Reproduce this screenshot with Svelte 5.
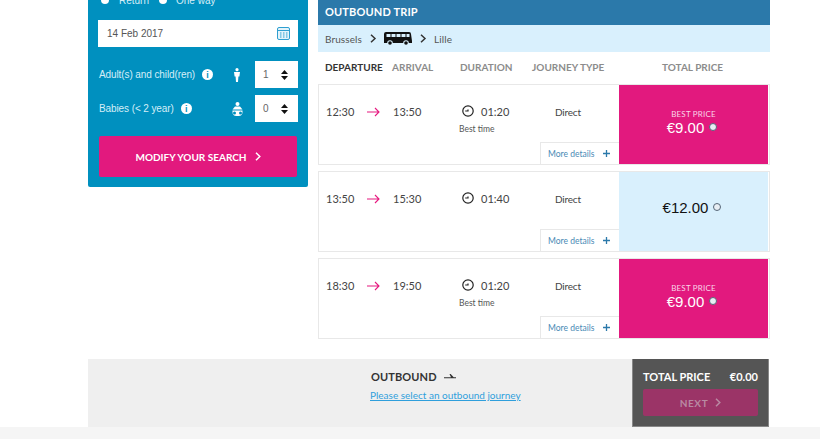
<script>
  const trips = [
    { dep: '12:30', arr: '13:50', dur: '01:20', best: true, price: '€9.00' },
    { dep: '13:50', arr: '15:30', dur: '01:40', best: false, price: '€12.00' },
    { dep: '18:30', arr: '19:50', dur: '01:20', best: true, price: '€9.00' }
  ];
</script>

<div class="page">
  <div class="columns">
    <aside class="search">
      <div class="radios">
        <span class="radio"></span><span class="r-return">Return</span>
        <span class="radio"></span><span class="r-oneway">One way</span>
      </div>
      <div class="date">
        <span>14 Feb 2017</span>
        <svg width="13" height="13" viewBox="0 0 13 13" fill="none" stroke="#2f9fd0">
          <rect x="0.5" y="0.5" width="12" height="12" rx="1.500" fill="#e4f4fb" />
          <path d="M1 3.500h11" />
          <path d="M3 6h1.500M6 6h1.500M9 6h1.500M3 8h1.500M6 8h1.500M9 8h1.500M3 10h1.500M6 10h1.500M9 10h1.500" stroke-width="1.200" />
        </svg>
      </div>
      <div class="pax">
        <span class="pax-label">Adult(s) and child(ren)</span>
        <span class="info">i</span>
        <svg class="pax-icon" width="8" height="14" viewBox="0 0 8 14" fill="#fff">
          <circle cx="4" cy="1.700" r="1.600" />
          <path d="M1 4h6l-.6 4.500H5.400L5 14H3l-.4-5.500H1.600z" />
        </svg>
        <div class="select"><span>1</span><svg width="7" height="10" viewBox="0 0 7 10"><path d="M3.500 0 7 4H0zM0 6h7l-3.500 4z" fill="#111" /></svg></div>
      </div>
      <div class="pax">
        <span class="pax-label">Babies (&lt; 2 year)</span>
        <span class="info">i</span>
        <svg class="pax-icon baby" width="11" height="14" viewBox="0 0 11 14" fill="#fff">
          <circle cx="5.500" cy="2" r="2" />
          <path d="M3 4.500h5L10.500 7.500H.5z" />
          <path fill-rule="evenodd" d="M.5 8.500h10v1.500a4 4 0 0 1-4 4h-2a4 4 0 0 1-4-4zM2.500 9.500a1.500 1.500 0 0 0 0 3 1.500 1.500 0 0 0 0-3zM8.500 9.500a1.500 1.500 0 0 0 0 3 1.500 1.500 0 0 0 0-3z" />
        </svg>
        <div class="select"><span>0</span><svg width="7" height="10" viewBox="0 0 7 10"><path d="M3.500 0 7 4H0zM0 6h7l-3.500 4z" fill="#111" /></svg></div>
      </div>
      <button type="button" class="modify">
        MODIFY YOUR SEARCH
        <svg width="6" height="9" viewBox="0 0 6 9" fill="none" stroke="#fff" stroke-width="1.500"><path d="M1 .7 4.800 4.500 1 8.300" /></svg>
      </button>
    </aside>

    <main class="results">
      <h2>OUTBOUND TRIP</h2>
      <div class="route">
        <span>Brussels</span>
        <svg class="chev" width="7" height="9" viewBox="0 0 7 9" fill="none" stroke="#333" stroke-width="1.500"><path d="M1 .7 5 4.500 1 8.300" /></svg>
        <svg class="bus" width="28" height="13" viewBox="0 0 28 13">
          <path d="M2 0h23a2 2 0 0 1 2 2l1 7v2h-3.200a2.800 2.800 0 0 0-5.600 0H8.800a2.800 2.800 0 0 0-5.600 0H0V2a2 2 0 0 1 2-2z" fill="#111" />
          <path d="M2.500 2h4v3h-4zM7.500 2h4v3h-4zM12.500 2h4v3h-4zM17.500 2h4v3h-4zM22.500 2h3v3h-3z" fill="#d9f0fd" />
          <circle cx="6" cy="11" r="1.800" fill="#111" /><circle cx="22" cy="11" r="1.800" fill="#111" />
        </svg>
        <svg class="chev" width="7" height="9" viewBox="0 0 7 9" fill="none" stroke="#333" stroke-width="1.500"><path d="M1 .7 5 4.500 1 8.300" /></svg>
        <span class="to">Lille</span>
      </div>
      <div class="heads">
        <span class="h-dep">DEPARTURE</span>
        <span class="h-arr">ARRIVAL</span>
        <span class="h-dur">DURATION</span>
        <span class="h-type">JOURNEY TYPE</span>
        <span class="h-price">TOTAL PRICE</span>
      </div>

      {#each trips as trip}
        <div class="trip">
          <div class="info-cell">
            <div class="times">
              <span class="dep">{trip.dep}</span>
              <svg class="arrow" width="13" height="10" viewBox="0 0 13 10" fill="none" stroke="#e6197f" stroke-width="1.100"><path d="M0 5h12M8 1l4 4-4 4" /></svg>
              <span class="arr">{trip.arr}</span>
              <div class="dur">
                <div class="dur-line">
                  <svg width="12" height="12" viewBox="0 0 12 12" fill="none" stroke="#222" stroke-width="1.200"><circle cx="6" cy="6" r="5.200" /><path d="M3.200 6H6V4.500" /></svg>
                  <span>{trip.dur}</span>
                </div>
                {#if trip.best}<div class="best-time">Best time</div>{/if}
              </div>
              <span class="type">Direct</span>
            </div>
            <div class="more">
              <span>More details</span>
              <svg width="7" height="7" viewBox="0 0 7 7" stroke="#2b79aa" stroke-width="1.300"><path d="M3.500 0v7M0 3.500h7" /></svg>
            </div>
          </div>
          <div class="price" class:best={trip.best}>
            {#if trip.best}<div class="best-label">BEST PRICE</div>{/if}
            <div class="amount"><span>{trip.price}</span><span class="dot"></span></div>
          </div>
        </div>
      {/each}
    </main>
  </div>

  <div class="summary">
    <div class="selection">
      <div class="sel-title">
        OUTBOUND
        <svg width="12" height="5" viewBox="0 0 12 5" fill="#333"><path d="M0 3.200h7L5.500 0h1.200l3 3.200H12v1H0z" /></svg>
      </div>
      <a href="#top" class="sel-link">Please select an outbound journey</a>
    </div>
    <div class="total">
      <div class="total-line"><span>TOTAL PRICE</span><span>€0.00</span></div>
      <div class="next">
        NEXT
        <svg width="6" height="9" viewBox="0 0 6 9" fill="none" stroke="#b98aa3" stroke-width="1.500"><path d="M1 .7 4.800 4.500 1 8.300" /></svg>
      </div>
    </div>
  </div>
  <div class="footer"></div>
</div>

<style>
  :global(body) {
    background: #fff;
    overflow: hidden;
  }

  .page {
    height: 439px;
    overflow: hidden;
    font-family: Lato, sans-serif;
    color: #333;
  }

  .columns {
    display: flex;
    align-items: flex-start;
    gap: 10px;
    width: 682px;
    height: 359px;
    margin-left: 88px;
  }

  /* left search panel */
  .search {
    box-sizing: border-box;
    width: 220px;
    height: 187px;
    padding: 0 10px;
    background: #0090bf;
    border-radius: 0 0 2px 2px;
    color: #d5eef7;
    font-family: "Liberation Sans", sans-serif;
    font-size: 10px;
  }

  .radios {
    display: flex;
    align-items: center;
    height: 0;
    margin: 0 0 20px 3px;
  }

  .radio {
    flex: none;
    width: 8px;
    height: 8px;
    background: #fff;
    border-radius: 50%;
  }

  .r-return {
    width: 40px;
    margin-left: 10px;
  }

  .r-oneway {
    margin-left: 9px;
  }

  .date {
    display: flex;
    align-items: center;
    justify-content: space-between;
    box-sizing: border-box;
    height: 27px;
    padding: 0 8px 0 9px;
    background: #fff;
    color: #555;
  }

  .pax {
    display: flex;
    align-items: center;
    height: 27px;
    margin-top: 7px;
    padding-left: 1px;
  }

  .date + .pax {
    margin-top: 14px;
  }

  .pax-label {
    white-space: nowrap;
    letter-spacing: -0.1px;
  }

  .info {
    display: flex;
    align-items: center;
    justify-content: center;
    width: 11px;
    height: 11px;
    margin-left: 7px;
    background: #fff;
    border-radius: 50%;
    color: #0090bf;
    font-size: 9px;
    font-weight: bold;
  }

  .pax-icon {
    margin-left: auto;
    margin-right: 14px;
  }

  .pax-icon.baby {
    margin-right: 12px;
  }

  .select {
    display: flex;
    align-items: center;
    justify-content: space-between;
    box-sizing: border-box;
    width: 43px;
    height: 27px;
    padding: 0 10px 0 8px;
    background: #fff;
    color: #666;
  }

  .modify {
    display: flex;
    align-items: center;
    justify-content: center;
    gap: 8px;
    width: 198px;
    height: 41px;
    margin: 14px 0 0 1px;
    padding: 0;
    border: 0;
    border-radius: 2px;
    background: #e2197e;
    color: #fff;
    font: bold 10px Lato, sans-serif;
  }

  /* results */
  .results {
    width: 452px;
  }

  h2 {
    box-sizing: border-box;
    height: 25px;
    margin: 0;
    padding-left: 7px;
    background: #2b79aa;
    color: #fff;
    font-size: 11px;
    font-weight: bold;
    line-height: 24px;
    letter-spacing: 0.15px;
  }

  .route {
    display: flex;
    align-items: center;
    height: 27px;
    padding-left: 7px;
    background: #d9f0fd;
    color: #555;
    font-size: 10px;
    letter-spacing: 0.1px;
  }

  .chev {
    margin: 0 7px 0 8px;
  }

  .heads {
    display: flex;
    align-items: center;
    box-sizing: border-box;
    height: 32px;
    padding-bottom: 2px;
    color: #8c8c8c;
    font-size: 10px;
    font-weight: bold;
    white-space: nowrap;
  }

  .heads span {
    display: block;
    box-sizing: border-box;
  }

  .h-dep {
    width: 74px;
    padding-left: 7px;
    color: #333;
  }

  .h-arr {
    width: 68px;
  }

  .h-dur {
    width: 72px;
  }

  .h-type {
    width: 130px;
  }

  .trip {
    display: flex;
    box-sizing: border-box;
    width: 452px;
    height: 81px;
    margin-bottom: 6px;
    border: 1px solid #e8e8e8;
  }

  .info-cell {
    position: relative;
    width: 300px;
  }

  .times {
    display: flex;
    align-items: flex-start;
    padding: 20px 0 0 7px;
    font-size: 11px;
    color: #444;
  }

  .dep {
    width: 41px;
  }

  .arrow {
    margin-top: 2px;
  }

  .arr {
    width: 69px;
    margin-left: 13px;
  }

  .dur {
    width: 93px;
  }

  .dur-line {
    display: flex;
    align-items: center;
    gap: 7px;
  }

  .dur-line svg {
    margin-top: -2px;
  }

  .best-time {
    margin: 6px 0 0 -3px;
    font-size: 8.500px;
    color: #555;
  }

  .type {
    font-size: 10px;
    line-height: 14px;
    letter-spacing: -0.2px;
  }

  .more {
    position: absolute;
    right: 0;
    bottom: 0;
    display: flex;
    align-items: center;
    justify-content: space-between;
    box-sizing: border-box;
    width: 79px;
    height: 22px;
    padding: 0 9px 0 7px;
    border: 1px solid #e8e8e8;
    border-width: 1px 0 0 1px;
    background: #fff;
    color: #4a8ab5;
    font-size: 8.500px;
  }

  .price {
    display: flex;
    flex-direction: column;
    align-items: center;
    justify-content: center;
    box-sizing: border-box;
    width: 149px;
    padding: 0 3px 8px 0;
    background: #d9f0fd;
    color: #111;
  }

  .price.best {
    padding-bottom: 4px;
    background: #e2197e;
    color: #fff;
  }

  .best-label {
    margin-bottom: -1px;
    margin-left: 3px;
    font-size: 8px;
    line-height: 11px;
    letter-spacing: 0.2px;
    color: #f9d5e8;
  }

  .amount {
    display: flex;
    align-items: center;
    gap: 5px;
    font-family: "Liberation Sans", sans-serif;
    font-size: 15px;
    line-height: 17px;
  }

  .dot {
    box-sizing: border-box;
    width: 8px;
    height: 8px;
    margin-top: -1px;
    border: 1px solid #567;
    border-radius: 50%;
    background: #e8eef4;
  }

  /* bottom bar */
  .summary {
    display: flex;
    width: 681px;
    height: 68px;
    margin-left: 88px;
    background: #efefef;
  }

  .selection {
    box-sizing: border-box;
    width: 544px;
    padding: 11px 0 0 282px;
  }

  .sel-title {
    display: flex;
    align-items: center;
    gap: 7px;
    padding-left: 1px;
    font-size: 11px;
    font-weight: bold;
    letter-spacing: 0.1px;
    color: #333;
  }

  .sel-link {
    display: block;
    margin-top: 6px;
    color: #2f9fdc;
    font-size: 10px;
    text-decoration: underline;
    white-space: nowrap;
  }

  .total {
    box-sizing: border-box;
    width: 137px;
    padding: 11px 10px 0;
    background: #555;
    border: 1px solid #888;
    border-width: 0 1px 1px;
    color: #fff;
  }

  .total-line {
    display: flex;
    justify-content: space-between;
    font-size: 11px;
    font-weight: bold;
  }

  .next {
    display: flex;
    align-items: center;
    justify-content: center;
    gap: 7px;
    height: 27px;
    margin-top: 6px;
    border-radius: 2px;
    background: #9b3467;
    color: #b98aa3;
    font-size: 10px;
    font-weight: bold;
    letter-spacing: 0.6px;
  }

  .footer {
    height: 12px;
    background: #f5f5f5;
  }
</style>
